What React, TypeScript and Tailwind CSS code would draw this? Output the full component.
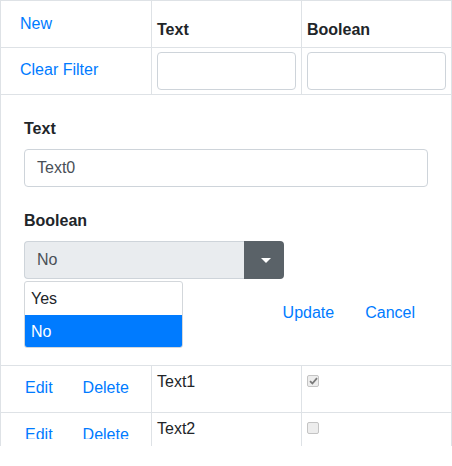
import React from "react";

type Row = {
  text: string;
  checked: boolean;
};

const rows: Row[] = [
  { text: "Text1", checked: true },
  { text: "Text2", checked: false },
];

function Checkbox({ checked }: { checked: boolean }) {
  return (
    <span className="flex h-[12px] w-[12px] items-center justify-center rounded-[2px] border border-[#c4c4c4] bg-[#ededed]">
      {checked && (
        <svg width="9" height="8" viewBox="0 0 9 8">
          <path d="M1 4.2 L3.4 6.5 L8 1.2" fill="none" stroke="#7a7a7a" strokeWidth="1.8" />
        </svg>
      )}
    </span>
  );
}

export default function App() {
  return (
    <div className="h-[446px] w-[452px] overflow-hidden bg-white font-['Liberation_Sans',Arial,sans-serif] text-[16px] leading-[24px] text-[#212529]">
      <div className="grid grid-cols-[151px_150px_149px] border-l border-r border-t border-[#dee2e6]">
        {/* header */}
        <div className="h-[47px] border-b border-r border-[#dee2e6] pl-[19px] pt-[11px]">
          <a className="text-[#007bff]">New</a>
        </div>
        <div className="h-[47px] border-b border-r border-[#dee2e6] pl-[5px] pt-[17px] font-bold">Text</div>
        <div className="h-[47px] border-b border-[#dee2e6] pl-[5px] pt-[17px] font-bold">Boolean</div>

        {/* filter */}
        <div className="h-[47px] border-b border-r border-[#dee2e6] pl-[19px] pt-[10px]">
          <a className="text-[#007bff]">Clear Filter</a>
        </div>
        <div className="h-[47px] border-b border-r border-[#dee2e6] px-[5px] pt-[4px]">
          <div className="h-[38px] rounded-[4px] border border-[#ced4da] bg-white" />
        </div>
        <div className="h-[47px] border-b border-[#dee2e6] px-[5px] pt-[4px]">
          <div className="h-[38px] rounded-[4px] border border-[#ced4da] bg-white" />
        </div>

        {/* edit row */}
        <div className="col-span-3 h-[271px] border-b border-[#dee2e6] px-[23px] pt-[22px]">
          <div className="font-bold">Text</div>
          <div className="mt-[8px] flex h-[38px] items-center rounded-[4px] border border-[#ced4da] pl-[12px] text-[#495057]">
            Text0
          </div>
          <div className="mt-[22px] font-bold">Boolean</div>
          <div className="relative mt-[8px] flex h-[38px] w-[260px]">
            <div className="flex flex-1 items-center rounded-l-[4px] border border-r-0 border-[#ced4da] bg-[#e9ecef] pl-[12px] text-[#495057]">
              No
            </div>
            <div className="flex w-[40px] items-center justify-center rounded-r-[4px] bg-[#5a6268] pl-[4px]">
              <span className="h-0 w-0 border-l-[5px] border-r-[5px] border-t-[5px] border-l-transparent border-r-transparent border-t-white" />
            </div>
            <div className="absolute left-0 top-[40px] w-[159px] overflow-hidden rounded-[3px] border border-[#d3d7db] bg-white">
              <div className="h-[33px] pl-[6px] pt-[5px]">Yes</div>
              <div className="h-[32px] bg-[#007bff] pl-[6px] pt-[5px] text-white">No</div>
            </div>
          </div>
          <div className="mr-[13px] mt-[22px] flex justify-end gap-[31px] text-[#007bff]">
            <a>Update</a>
            <a>Cancel</a>
          </div>
        </div>

        {/* data rows */}
        {rows.map((row, i) => {
          const last = i === rows.length - 1;
          const clip = last ? "h-[26px] overflow-hidden" : "";
          return (
            <React.Fragment key={row.text}>
              <div className="h-[47px] border-b border-r border-[#dee2e6]">
                <div className={`flex gap-[30px] pl-[24px] pt-[10px] text-[#007bff] ${clip}`}>
                  <a>Edit</a>
                  <a>Delete</a>
                </div>
              </div>
              <div className="h-[47px] border-b border-r border-[#dee2e6]">
                <div className={`pl-[5px] pt-[4px] ${clip}`}>{row.text}</div>
              </div>
              <div className="h-[47px] border-b border-[#dee2e6]">
                <div className={`pl-[5px] pt-[9px] ${clip}`}>
                  <Checkbox checked={row.checked} />
                </div>
              </div>
            </React.Fragment>
          );
        })}
      </div>
    </div>
  );
}
